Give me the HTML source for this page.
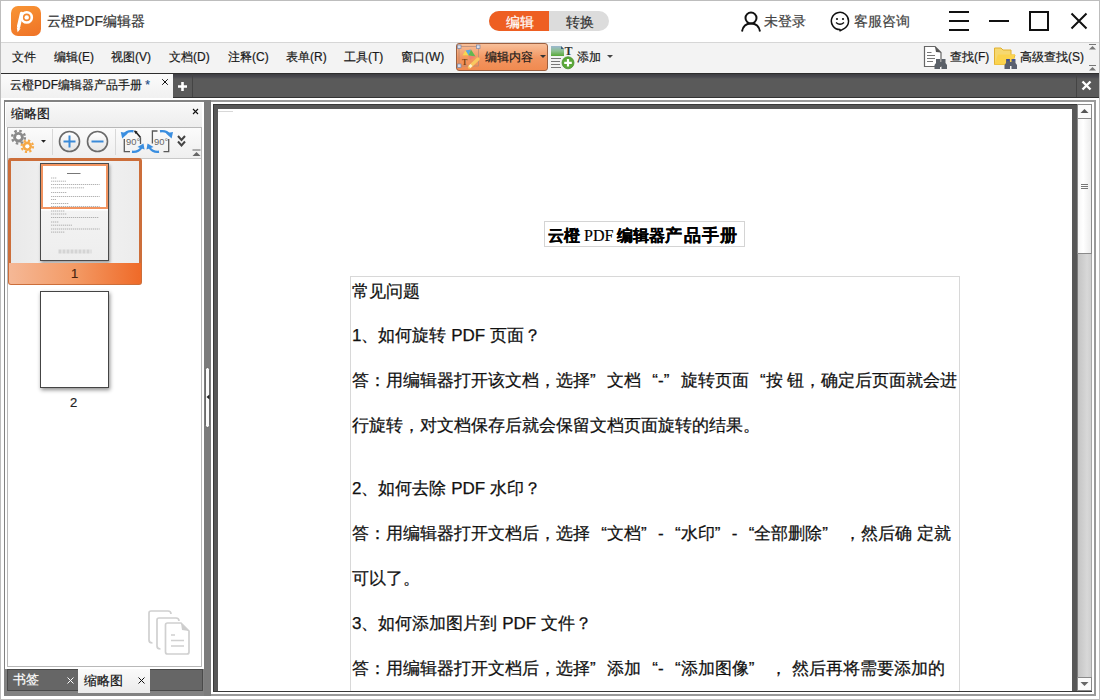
<!DOCTYPE html>
<html><head><meta charset="utf-8">
<style>
*{box-sizing:border-box;margin:0;padding:0}
html,body{width:1100px;height:700px;overflow:hidden;background:#fff;font-family:"Liberation Sans",sans-serif;color:#222}
.a{position:absolute}
.t{position:absolute;white-space:nowrap;line-height:1;-webkit-text-stroke:0.2px currentColor}
.m{font-size:12px;color:#1a1a1a;top:51px}
.ql{display:inline-block;width:1em;text-align:right}.qr{display:inline-block;width:1em;text-align:left}
.dt{position:absolute;white-space:nowrap;line-height:1;font-size:17px;color:#111;left:352px;-webkit-text-stroke:0.25px #111}
</style></head><body>
<!-- window frame -->
<div class="a" style="left:0;top:0;width:1100px;height:700px;background:#fff;border:1px solid #bdbdbd"></div>

<!-- ============ TITLE BAR ============ -->
<div class="a" style="left:11px;top:6px;width:30px;height:30px;border-radius:7px;background:linear-gradient(160deg,#f89535,#ef7226)"></div>
<svg class="a" style="left:11px;top:6px" width="30" height="30" viewBox="0 0 30 30">
 <circle cx="15.7" cy="11.4" r="5.1" fill="none" stroke="#fff" stroke-width="2.6"/>
 <circle cx="15.7" cy="11.4" r="2.2" fill="#fff"/>
 <path d="M10.6 7.5 L7.6 20.5" stroke="#fff" stroke-width="3.4" stroke-linecap="round"/>
 <path d="M5.8 21.6 L9.6 22.4 L6.6 26.2 Z" fill="#fff"/>
</svg>
<div class="t" style="left:47px;top:14px;font-size:14px;color:#333">云橙PDF编辑器</div>

<div class="a" style="left:489px;top:11px;width:120px;height:20px;border-radius:10px;background:#dcdcdc"></div>
<div class="a" style="left:489px;top:11px;width:60px;height:20px;border-radius:10px 0 0 10px;background:#ee5f22"></div>
<div class="t" style="left:506px;top:15px;font-size:14px;color:#fff">编辑</div>
<div class="t" style="left:566px;top:15px;font-size:14px;color:#333">转换</div>

<svg class="a" style="left:740px;top:11px" width="22" height="21" viewBox="0 0 22 21">
 <circle cx="11" cy="7" r="5.5" fill="none" stroke="#111" stroke-width="2"/>
 <path d="M2 20.5 C3 14.5 6.5 12.5 11 12.5 C15.5 12.5 19 14.5 20 20.5" fill="none" stroke="#111" stroke-width="2"/>
</svg>
<div class="t" style="left:764px;top:14px;font-size:14px;color:#444">未登录</div>
<svg class="a" style="left:830px;top:11px" width="20" height="21" viewBox="0 0 20 21">
 <path d="M10 18.6 A8.6 8.6 0 1 1 14.5 17.3 L10 19.8 Z" fill="none" stroke="#111" stroke-width="1.5" stroke-linejoin="round"/>
 <circle cx="7" cy="8" r="1.1" fill="#111"/><circle cx="13" cy="8" r="1.1" fill="#111"/>
 <path d="M6 11.5 Q10 15 14 11.5" fill="none" stroke="#111" stroke-width="1.4"/>
</svg>
<div class="t" style="left:854px;top:14px;font-size:14px;color:#444">客服咨询</div>

<div class="a" style="left:949px;top:11px;width:20px;height:2px;background:#111"></div>
<div class="a" style="left:949px;top:20px;width:20px;height:2px;background:#111"></div>
<div class="a" style="left:949px;top:29px;width:20px;height:2px;background:#111"></div>
<div class="a" style="left:989px;top:20px;width:20px;height:2px;background:#111"></div>
<div class="a" style="left:1029px;top:11px;width:20px;height:20px;border:2px solid #111"></div>
<svg class="a" style="left:1070px;top:12px" width="18" height="18" viewBox="0 0 18 18"><path d="M1.5 1.5 L16.5 16.5 M16.5 1.5 L1.5 16.5" stroke="#111" stroke-width="2"/></svg>

<!-- ============ MENU BAR ============ -->
<div class="a" style="left:1px;top:42px;width:1098px;height:31px;background:#f3f3f3;border-top:1px solid #d6d6d6"></div>
<div class="t m" style="left:12px">文件</div>
<div class="t m" style="left:54px">编辑(E)</div>
<div class="t m" style="left:111px">视图(V)</div>
<div class="t m" style="left:169px">文档(D)</div>
<div class="t m" style="left:228px">注释(C)</div>
<div class="t m" style="left:286px">表单(R)</div>
<div class="t m" style="left:344px">工具(T)</div>
<div class="t m" style="left:401px">窗口(W)</div>

<div class="a" style="left:456px;top:43px;width:92px;height:28px;border:1px solid #9c6040;border-radius:3px;background:linear-gradient(#f8c09a,#f29560 55%,#f08a50)"></div>
<div class="t m" style="left:485px">编辑内容</div>
<div class="a" style="left:540px;top:55px;width:0;height:0;border-left:3px solid transparent;border-right:3px solid transparent;border-top:3px solid #333"></div>
<div class="t m" style="left:577px">添加</div>
<div class="a" style="left:607px;top:55px;width:0;height:0;border-left:3px solid transparent;border-right:3px solid transparent;border-top:3px solid #444"></div>

<div class="t m" style="left:950px">查找(F)</div>
<div class="t m" style="left:1020px">高级查找(S)</div>


<!-- edit content icon -->
<svg class="a" style="left:456px;top:44px" width="28" height="26" viewBox="0 0 28 26">
 <rect x="3" y="2.5" width="19.5" height="19.5" fill="none" stroke="#b08878" stroke-width="0.7"/>
 <rect x="1.5" y="1" width="3.5" height="3.5" fill="#d8dcea" stroke="#7888a8" stroke-width="0.7"/>
 <rect x="20.5" y="1" width="3.5" height="3.5" fill="#d8dcea" stroke="#7888a8" stroke-width="0.7"/>
 <rect x="1.5" y="20" width="3.5" height="3.5" fill="#d8dcea" stroke="#7888a8" stroke-width="0.7"/>
 <path d="M9.5 6.5 L15 5.5 L12.5 11.5 Z" fill="#5aa8e0"/>
 <path d="M15 5.5 L19.5 12.5 L12.5 11.5 Z" fill="#60b850"/>
 <path d="M6.5 11.5 L12.5 11.5 L9.5 6.5 Z" fill="#f8d850"/>
 <path d="M12.5 11.5 L19.5 12.5 L14 16 Z" fill="#f07878" opacity="0.7"/>
 <path d="M6.5 11.5 L12.5 11.5 L10 15 Z" fill="#f8a050" opacity="0.8"/>
 <text x="6" y="20.5" font-family="Liberation Serif" font-size="8" font-weight="bold" fill="#7a4010">T</text>
 <path d="M13.5 23 L22 15" stroke="#f8c860" stroke-width="3.4" stroke-linecap="round"/>
 <path d="M13.5 23 L15.5 21" stroke="#fff4d0" stroke-width="2.6"/>
</svg>
<!-- add icon -->
<svg class="a" style="left:550px;top:45px" width="25" height="25" viewBox="0 0 25 25">
 <defs><linearGradient id="gimg" x1="0" y1="0" x2="0" y2="1"><stop offset="0" stop-color="#9cb8d0"/><stop offset="0.5" stop-color="#8cc090"/><stop offset="1" stop-color="#58a838"/></linearGradient></defs>
 <path d="M1 1 L11 1 L14 4 L14 11 L1 11 Z" fill="url(#gimg)"/>
 <path d="M11 1 L14 4 L11 4 Z" fill="#3a5a78"/>
 <text x="14.5" y="10" font-family="Liberation Serif" font-size="12" font-weight="bold" fill="#333">T</text>
 <path d="M1 13.5 H11 M1 16.5 H10 M1 19.5 H10 M1 22.5 H11" stroke="#777" stroke-width="1"/>
 <circle cx="18" cy="17.8" r="6" fill="#5aa838"/>
 <circle cx="18" cy="17.8" r="6" fill="none" stroke="#4a9030" stroke-width="0.8"/>
 <path d="M18 14 V21.6 M14.2 17.8 H21.8" stroke="#fff" stroke-width="2.2"/>
</svg>
<!-- find icon -->
<svg class="a" style="left:923px;top:45px" width="26" height="25" viewBox="0 0 26 25">
 <path d="M1.5 1.5 H12 L18 7.5 V21.5 H1.5 Z" fill="#fff" stroke="#666" stroke-width="1.2"/>
 <path d="M12 1.5 L18 7.5 L13 7 Z" fill="#555"/>
 <path d="M4 7.5 H8.5 M4 10.5 H12 M4 13.5 H12 M4 16.5 H10" stroke="#777" stroke-width="1"/>
 <path d="M13 14 h4 v3 h1.5 v-3 h4 v4 l1.5 2 v4 h-5.5 v-3 h-1.5 v3 h-5.5 v-4 l1.5 -2 z" fill="#5a6068"/>
</svg>
<!-- adv find icon -->
<svg class="a" style="left:993px;top:45px" width="26" height="25" viewBox="0 0 26 25">
 <path d="M1.5 3 H8 L10 5 H18 V10 H22 L19 19.5 H1.5 Z" fill="#f6d870" stroke="#e0b030" stroke-width="1"/>
 <path d="M5 9.5 H22 L19 19.5 H1.5 Z" fill="#fbd34e"/>
 <path d="M13 14 h4 v3 h1.5 v-3 h4 v4 l1.5 2 v4 h-5.5 v-3 h-1.5 v3 h-5.5 v-4 l1.5 -2 z" fill="#5a6070"/>
 <path d="M14 14 h2 v2 h-2 z M19.5 14 h2 v2 h-2 z" fill="#3a4aa0"/>
</svg>
<!-- collapse arrows -->
<svg class="a" style="left:1088px;top:43px" width="9" height="28" viewBox="0 0 9 28">
 <path d="M1 1.5 H8" stroke="#777" stroke-width="1"/><path d="M1 6.5 L4.5 3 L8 6.5 Z" fill="#777"/>
 <path d="M1 22.5 H8" stroke="#777" stroke-width="1"/><path d="M1 27.5 L4.5 24 L8 27.5 Z" fill="#777"/>
</svg>

<!-- ============ TAB BAR ============ -->
<div class="a" style="left:1px;top:73px;width:1098px;height:25px;background:linear-gradient(#3e3e42 0,#4a4a50 3px,#5a5a5a 5px,#5a5a5a);border-top:1px solid #2e2e2e;border-bottom:1px solid #333"></div>
<div class="a" style="left:1px;top:74px;width:172px;height:25px;background:linear-gradient(#fbfbfb,#f0f0f0)"></div>
<div class="t" style="left:10px;top:79px;font-size:12px;color:#1a1a1a">云橙PDF编辑器产品手册 <span style="color:#1e4f8a">*</span></div>
<div class="a" style="left:192px;top:74px;width:1px;height:23px;background:#444"></div>
<div class="a" style="left:1076px;top:74px;width:1px;height:23px;background:#444"></div>


<svg class="a" style="left:161px;top:78px" width="8" height="8" viewBox="0 0 8 8"><path d="M1.2 1.2 L6.8 6.8 M6.8 1.2 L1.2 6.8" stroke="#111" stroke-width="1"/></svg>
<svg class="a" style="left:177px;top:81px" width="11" height="11" viewBox="0 0 11 11"><path d="M5.5 1 V10 M1 5.5 H10" stroke="#fff" stroke-width="2.6"/></svg>
<svg class="a" style="left:1081px;top:80px" width="11" height="11" viewBox="0 0 11 11"><path d="M1.5 1.5 L9.5 9.5 M9.5 1.5 L1.5 9.5" stroke="#fff" stroke-width="2.4"/></svg>

<!-- ============ BODY ============ -->
<div class="a" style="left:1px;top:98px;width:1098px;height:601px;background:#fff"></div>

<!-- left panel -->
<div class="a" style="left:4px;top:100px;width:207px;height:596px;background:#828282"></div>
<div class="a" style="left:5px;top:102px;width:199px;height:567px;background:#fff"></div>
<div class="a" style="left:6px;top:103px;width:196px;height:24px;background:linear-gradient(#f8f8f8,#ededed)"></div>
<div class="t" style="left:11px;top:108px;font-size:12.5px;color:#111">缩略图</div>
<div class="a" style="left:7px;top:127px;width:195px;height:540px;border:1px solid #b8b8b8;background:#fff"></div>
<div class="a" style="left:8px;top:128px;width:193px;height:31px;background:linear-gradient(#fbfbfb,#efefef);border-bottom:1px solid #c8c8c8"></div>

<svg class="a" style="left:192px;top:108px" width="7" height="7" viewBox="0 0 7 7"><path d="M1 1 L6 6 M6 1 L1 6" stroke="#111" stroke-width="1.1"/></svg>
<!-- toolbar icons -->
<svg class="a" style="left:9px;top:128px" width="40" height="28" viewBox="0 0 40 28">
 <g transform="translate(9.5,9.2)">
  <circle r="5.3" fill="#8a8a8a"/>
  <circle r="6.4" fill="none" stroke="#8a8a8a" stroke-width="2.4" stroke-dasharray="2.5 2.53"/>
  <circle r="2.4" fill="#fff"/>
 </g>
 <g transform="translate(18.3,18.3)">
  <circle r="4.7" fill="#f6a845"/>
  <circle r="5.7" fill="none" stroke="#f6a845" stroke-width="2.2" stroke-dasharray="2.2 2.28"/>
  <circle r="2.1" fill="#fff"/>
 </g>
 <path d="M32 12 L37 12 L34.5 14.8 Z" fill="#222"/>
</svg>
<div class="a" style="left:52px;top:129px;width:1px;height:26px;background:#d8d8d8"></div>
<svg class="a" style="left:58px;top:130px" width="52" height="23" viewBox="0 0 52 23">
 <defs><linearGradient id="gc" x1="0" y1="0" x2="0" y2="1"><stop offset="0" stop-color="#fff"/><stop offset="1" stop-color="#e4e4e4"/></linearGradient></defs>
 <circle cx="11.5" cy="11.5" r="10" fill="url(#gc)" stroke="#6a6a6a" stroke-width="1.6"/>
 <path d="M11.5 5.5 V17.5 M5.5 11.5 H17.5" stroke="#3a8ad8" stroke-width="2"/>
 <circle cx="39.5" cy="11.5" r="10" fill="url(#gc)" stroke="#6a6a6a" stroke-width="1.6"/>
 <path d="M33.5 11.5 H45.5" stroke="#3a8ad8" stroke-width="2"/>
</svg>
<div class="a" style="left:115px;top:129px;width:1px;height:26px;background:#d8d8d8"></div>
<svg class="a" style="left:118px;top:125px" width="60" height="32" viewBox="0 0 60 32">
 <g fill="none" stroke="#5a5a5a" stroke-width="1.3">
  <path d="M6.3 14 V26.6 H12"/><path d="M22.5 12.5 V19"/>
  <path d="M34.4 18.6 V6 H39.5"/><path d="M50.7 14 V26.6 H45.5"/>
 </g>
 <text x="8" y="20" font-family="Liberation Sans" font-size="9.4" fill="#666">90°</text>
 <text x="36" y="20" font-family="Liberation Sans" font-size="9.4" fill="#666">90°</text>
 <path d="M17 6 L22.5 12.5" stroke="#222" stroke-width="1.6"/><path d="M15.8 5.5 L19.5 6.5 L17.5 9 Z" fill="#222"/>
 <g fill="none" stroke="#3a8ee0" stroke-width="2.4">
  <path d="M15.5 6.3 Q9 5.3 6 9.5"/>
  <path d="M14 26.8 Q20.5 27.5 23.5 22.5"/>
  <path d="M42 6.3 Q48.5 5.3 51.5 9.5"/>
  <path d="M41 26.8 Q34.5 27.5 31.5 22.5"/>
 </g>
 <g fill="#3a8ee0">
  <path d="M2.8 7 L10 8.2 L4.2 13.5 Z"/>
  <path d="M26.5 24.5 L19.5 22 L25.5 18.5 Z"/>
  <path d="M55 7 L47.8 8.2 L53.6 13.5 Z"/>
  <path d="M28.5 24.5 L35.5 22 L29.5 18.5 Z"/>
 </g>
</svg>
<svg class="a" style="left:177px;top:135px" width="9" height="13" viewBox="0 0 9 13"><path d="M1 1 L4.5 5 L8 1 M1 6.5 L4.5 10.5 L8 6.5" fill="none" stroke="#444" stroke-width="2"/></svg>
<svg class="a" style="left:192px;top:149px" width="9" height="8" viewBox="0 0 9 8"><path d="M0.5 1 H8.5" stroke="#666" stroke-width="1"/><path d="M0.5 7 L4.5 3 L8.5 7 Z" fill="#666"/></svg>

<!-- thumbnail 1 selected -->
<div class="a" style="left:8px;top:158px;width:134px;height:127px;border:3px solid #cc6e3a;border-radius:3px;background:linear-gradient(90deg,#e9e9e9,#f4f4f4 50%,#ececec)"></div>
<div class="a" style="left:40px;top:163px;width:69px;height:98px;background:linear-gradient(#fff 0,#fff 48%,#f3f3f3 49%,#eeeeee);border:1px solid #4a4a4a;box-shadow:1px 2px 3px rgba(0,0,0,0.35)"></div>
<svg class="a" style="left:0;top:0" width="120" height="270" viewBox="0 0 120 270">
 <path d="M67 173.5 H80.5" stroke="#777" stroke-width="1"/>
 <path d="M51 178.0 H56.5 M51 181.2 H66.0 M51 184.5 H99.7 M51 187.8 H84.0 M51 192.5 H67.0 M51 196.5 H99.7 M51 199.5 H56.0 M51 203.5 H69.0 M51 206.5 H99.7 M51 211.0 H65.0 M51 214.0 H67.0 M51 217.5 H99.0 M51 222.0 H59.0 M51 225.2 H72.0 M51 229.0 H99.7 M51 232.1 H65.0" stroke="#a0a0a0" stroke-width="0.8" stroke-dasharray="1.3 0.7"/>
 <path d="M58.5 251.5 H91.5" stroke="#d4d4d4" stroke-width="4" stroke-dasharray="3 1"/>
</svg>
<div class="a" style="left:41px;top:164px;width:67px;height:45px;border:2px solid #f29460"></div>
<div class="a" style="left:9px;top:263px;width:132px;height:21px;border-radius:0 0 2px 2px;background:linear-gradient(90deg,#f5b896,#f39a65 50%,#ef6a28)"></div>
<div class="t" style="left:71px;top:267px;font-size:13px;color:#4a2410">1</div>

<!-- thumbnail 2 -->
<div class="a" style="left:40px;top:291px;width:69px;height:97px;background:#fff;border:1px solid #444;box-shadow:1px 2px 4px rgba(0,0,0,0.45)"></div>
<div class="t" style="left:70px;top:396px;font-size:13px;color:#222">2</div>

<!-- ghost pages icon -->
<svg class="a" style="left:146px;top:609px" width="46" height="48" viewBox="0 0 46 48">
 <g fill="none" stroke="#d0d0d0" stroke-width="1.7">
 <path d="M6.5 34 Q3 34 3 31 V4 Q3 2 5 2 H22 Q25 2 25 5"/>
 <path d="M14.5 40 Q11 40 11 37 V11 Q11 9 13 9 H30 Q33 9 33 12"/>
 <path d="M19.5 43 V16 Q19.5 14 21.5 14 H35 L43 22 V43 Q43 45 41 45 H21.5 Q19.5 45 19.5 43 Z" fill="#fff"/>
 <path d="M25 26 H29 M25 31.5 H38 M25 37 H38"/>
 </g>
 <path d="M35 14 L43 22 L36 21 Z" fill="#cdcdcd"/>
</svg>

<!-- bottom tabs -->
<div class="a" style="left:7px;top:669px;width:196px;height:22px;background:#666;border:1px solid #4a4a4a"></div>
<div class="t" style="left:13px;top:674px;font-size:12.5px;color:#fff">书签</div>
<svg class="a" style="left:67px;top:677px" width="7" height="7" viewBox="0 0 7 7"><path d="M0.5 0.5 L6.5 6.5 M6.5 0.5 L0.5 6.5" stroke="#fff" stroke-width="1"/></svg>
<div class="a" style="left:78px;top:669px;width:72px;height:24px;background:linear-gradient(#fafafa,#ebebeb)"></div>
<div class="t" style="left:84px;top:675px;font-size:12.5px;color:#111">缩略图</div>
<svg class="a" style="left:138px;top:677px" width="7" height="7" viewBox="0 0 7 7"><path d="M0.5 0.5 L6.5 6.5 M6.5 0.5 L0.5 6.5" stroke="#111" stroke-width="1"/></svg>

<!-- splitter -->
<div class="a" style="left:204px;top:100px;width:7px;height:596px;background:#7c7c7c"></div>
<div class="a" style="left:205px;top:367px;width:5px;height:61px;border-radius:3px;background:#fbfbfb;border:1px solid #6a6a6a"></div>
<svg class="a" style="left:206px;top:394px" width="4" height="6" viewBox="0 0 4 6"><path d="M3.5 0.5 L0.5 3 L3.5 5.5 Z" fill="#222"/></svg>

<!-- document frame -->
<div class="a" style="left:211px;top:100px;width:885px;height:596px;border:1px solid #8c8c8c;border-right:2px solid #9a9a9a;border-bottom:2px solid #9a9a9a;border-top:2px solid #9a9a9a;border-left:none;background:#fff"></div>
<div class="a" style="left:213px;top:104px;width:879px;height:588px;background:#575757;border:1px solid #3a3a3a"></div>
<div class="a" style="left:218px;top:109px;width:854px;height:582px;background:#fff"></div>
<div class="a" style="left:218px;top:111px;width:15px;height:1px;background:#d8d8d8"></div>

<!-- document text -->
<div class="a" style="left:544px;top:221px;width:201px;height:26px;border:1px solid #d4d4d4"></div>
<div class="a" style="left:350px;top:276px;width:610px;height:415px;border:1px solid #d8d8d8;border-bottom:none"></div>
<div class="t" style="left:548px;top:227px;font-size:16px;font-weight:bold;color:#000"><span style="font-family:'Liberation Serif',serif">云橙 <span style="font-weight:normal">PDF</span> 编辑器</span><span style="font-size:17px;position:relative;top:-0.5px;letter-spacing:1.2px">产品手册</span></div>
<div class="dt" style="top:283px">常见问题</div>
<div class="dt" style="top:327px">1、如何旋转 PDF 页面？</div>
<div class="dt" style="top:372px">答：用编辑器打开该文档，选择<span class="qr">”</span>文档<span class="ql">“</span>-<span class="qr">”</span>旋转页面<span class="ql">“</span>按 钮，确定后页面就会进</div>
<div class="dt" style="top:417px">行旋转，对文档保存后就会保留文档页面旋转的结果。</div>
<div class="dt" style="top:480px">2、如何去除 PDF 水印？</div>
<div class="dt" style="top:525px">答：用编辑器打开文档后，选择<span class="ql">“</span>文档<span class="qr">”</span>-<span class="ql">“</span>水印<span class="qr">”</span>-<span class="ql">“</span>全部删除<span class="qr">”</span> ，然后确 定就</div>
<div class="dt" style="top:570px">可以了。</div>
<div class="dt" style="top:615px">3、如何添加图片到 PDF 文件？</div>
<div class="dt" style="top:660px">答：用编辑器打开文档后，选择<span class="qr">”</span>添加<span class="ql">“</span>-<span class="ql">“</span>添加图像<span class="qr">”</span> ， 然后再将需要添加的</div>

<!-- scrollbar -->
<div class="a" style="left:1077px;top:104px;width:15px;height:587px;background:linear-gradient(90deg,#c4c4c4,#d8d8d8 70%,#cfcfcf);border-left:1px solid #7a7a7a;border-right:1px solid #a8a8a8"></div>
<div class="a" style="left:1077px;top:104px;width:15px;height:15px;background:#fafafa;border:1px solid #8a8a8a"></div>
<svg class="a" style="left:1080px;top:108px" width="9" height="6" viewBox="0 0 9 6"><path d="M0.5 5 L4.5 1 L8.5 5 Z" fill="#555"/></svg>
<div class="a" style="left:1077px;top:118px;width:15px;height:136px;background:linear-gradient(90deg,#f6f6f6,#ffffff 40%,#ececec);border:1px solid #8a8a8a"></div>
<div class="a" style="left:1081px;top:184px;width:7px;height:1px;background:#777"></div>
<div class="a" style="left:1081px;top:186px;width:7px;height:1px;background:#777"></div>
<div class="a" style="left:1081px;top:188px;width:7px;height:1px;background:#777"></div>
<div class="a" style="left:1077px;top:677px;width:15px;height:14px;background:#fafafa;border:1px solid #8a8a8a"></div>
<svg class="a" style="left:1080px;top:681px" width="9" height="6" viewBox="0 0 9 6"><path d="M0.5 1 L4.5 5 L8.5 1 Z" fill="#666"/></svg>
</body></html>
